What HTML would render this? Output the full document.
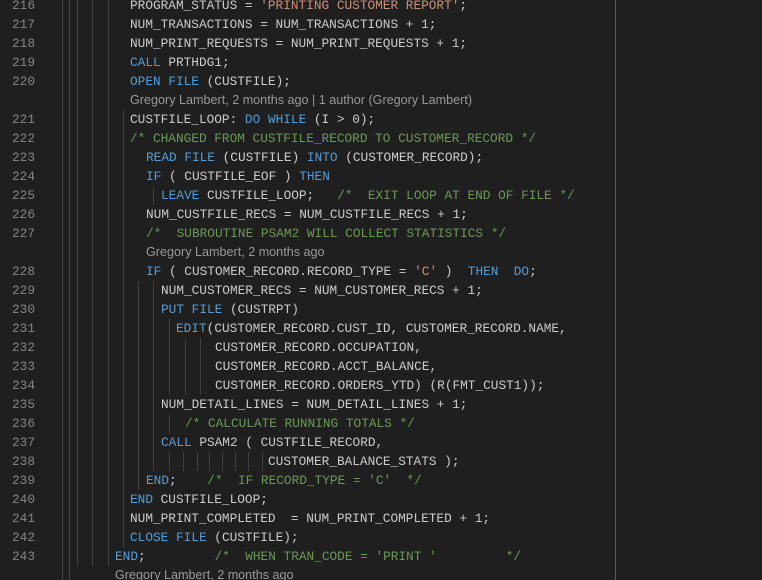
<!DOCTYPE html>
<html><head><meta charset="utf-8"><style>
html,body{margin:0;padding:0;background:#1f1f1f;width:762px;height:580px;overflow:hidden;position:relative}
.r{position:absolute;height:19px;line-height:19px;white-space:pre;font-family:"Liberation Mono",monospace;font-size:12.77px;color:#cccccc}
.n{position:absolute;left:0;width:35px;text-align:right;height:19px;line-height:19px;font-family:"Liberation Mono",monospace;font-size:12.77px;color:#858585}
.k{color:#569cd6}.c{color:#6a9955}.s{color:#ce9178}.m{color:#cccccc}
.cl{position:absolute;height:19px;line-height:19px;font-family:"Liberation Sans",sans-serif;font-size:12.6px;color:#999999;white-space:pre}
.g{position:absolute;width:1px;background:#404040}
.vb{position:absolute;left:615px;top:0;width:1px;height:580px;background:#5a5a5a}
</style></head><body>
<div class="g" style="left:62px;top:0;height:580px"></div>
<div class="g" style="left:69px;top:0;height:580px"></div>
<div class="g" style="left:77px;top:0;height:566px"></div>
<div class="g" style="left:92px;top:0;height:566px"></div>
<div class="g" style="left:108px;top:0;height:566px"></div>
<div class="g" style="left:123px;top:110px;height:437px"></div>
<div class="g" style="left:138px;top:281px;height:209px"></div>
<div class="g" style="left:153px;top:186px;height:19px"></div>
<div class="g" style="left:153px;top:281px;height:190px"></div>
<div class="g" style="left:169px;top:319px;height:76px"></div>
<div class="g" style="left:169px;top:414px;height:19px"></div>
<div class="g" style="left:169px;top:452px;height:19px"></div>
<div class="g" style="left:185px;top:338px;height:57px"></div>
<div class="g" style="left:200px;top:338px;height:57px"></div>
<div class="g" style="left:183px;top:452px;height:19px"></div>
<div class="g" style="left:197px;top:452px;height:19px"></div>
<div class="g" style="left:209px;top:452px;height:19px"></div>
<div class="g" style="left:222px;top:452px;height:19px"></div>
<div class="g" style="left:235px;top:452px;height:19px"></div>
<div class="g" style="left:248px;top:452px;height:19px"></div>
<div class="g" style="left:262px;top:452px;height:19px"></div>
<div class="vb"></div>

<div class="n" style="top:-4.5px">216</div><div class="r" style="top:-4.5px;left:130px">PROGRAM_STATUS = <span class="s">'PRINTING CUSTOMER REPORT'</span>;</div>
<div class="n" style="top:14.5px">217</div><div class="r" style="top:14.5px;left:130px">NUM_TRANSACTIONS = NUM_TRANSACTIONS + <span class="m">1</span>;</div>
<div class="n" style="top:33.5px">218</div><div class="r" style="top:33.5px;left:130px">NUM_PRINT_REQUESTS = NUM_PRINT_REQUESTS + <span class="m">1</span>;</div>
<div class="n" style="top:52.5px">219</div><div class="r" style="top:52.5px;left:130px"><span class="k">CALL</span> PRTHDG1;</div>
<div class="n" style="top:71.5px">220</div><div class="r" style="top:71.5px;left:130px"><span class="k">OPEN</span> <span class="k">FILE</span> (CUSTFILE);</div>
<div class="cl" style="top:91px;left:130px">Gregory Lambert, 2 months ago | 1 author (Gregory Lambert)</div>
<div class="n" style="top:109.5px">221</div><div class="r" style="top:109.5px;left:130px">CUSTFILE_LOOP: <span class="k">DO</span> <span class="k">WHILE</span> (I &gt; <span class="m">0</span>);</div>
<div class="n" style="top:128.5px">222</div><div class="r c" style="top:128.5px;left:130px">/* CHANGED FROM CUSTFILE_RECORD TO CUSTOMER_RECORD */</div>
<div class="n" style="top:147.5px">223</div><div class="r" style="top:147.5px;left:146px"><span class="k">READ</span> <span class="k">FILE</span> (CUSTFILE) <span class="k">INTO</span> (CUSTOMER_RECORD);</div>
<div class="n" style="top:166.5px">224</div><div class="r" style="top:166.5px;left:146px"><span class="k">IF</span> ( CUSTFILE_EOF ) <span class="k">THEN</span></div>
<div class="n" style="top:185.5px">225</div><div class="r" style="top:185.5px;left:161px"><span class="k">LEAVE</span> CUSTFILE_LOOP;   <span class="c">/*  EXIT LOOP AT END OF FILE */</span></div>
<div class="n" style="top:204.5px">226</div><div class="r" style="top:204.5px;left:146px">NUM_CUSTFILE_RECS = NUM_CUSTFILE_RECS + <span class="m">1</span>;</div>
<div class="n" style="top:223.5px">227</div><div class="r c" style="top:223.5px;left:146px">/*  SUBROUTINE PSAM2 WILL COLLECT STATISTICS */</div>
<div class="cl" style="top:243px;left:146px">Gregory Lambert, 2 months ago</div>
<div class="n" style="top:261.5px">228</div><div class="r" style="top:261.5px;left:146px"><span class="k">IF</span> ( CUSTOMER_RECORD.RECORD_TYPE = <span class="s">'C'</span> )  <span class="k">THEN</span>  <span class="k">DO</span>;</div>
<div class="n" style="top:280.5px">229</div><div class="r" style="top:280.5px;left:161px">NUM_CUSTOMER_RECS = NUM_CUSTOMER_RECS + <span class="m">1</span>;</div>
<div class="n" style="top:299.5px">230</div><div class="r" style="top:299.5px;left:161px"><span class="k">PUT</span> <span class="k">FILE</span> (CUSTRPT)</div>
<div class="n" style="top:318.5px">231</div><div class="r" style="top:318.5px;left:176px"><span class="k">EDIT</span>(CUSTOMER_RECORD.CUST_ID, CUSTOMER_RECORD.NAME,</div>
<div class="n" style="top:337.5px">232</div><div class="r" style="top:337.5px;left:215px">CUSTOMER_RECORD.OCCUPATION,</div>
<div class="n" style="top:356.5px">233</div><div class="r" style="top:356.5px;left:215px">CUSTOMER_RECORD.ACCT_BALANCE,</div>
<div class="n" style="top:375.5px">234</div><div class="r" style="top:375.5px;left:215px">CUSTOMER_RECORD.ORDERS_YTD) (R(FMT_CUST1));</div>
<div class="n" style="top:394.5px">235</div><div class="r" style="top:394.5px;left:161px">NUM_DETAIL_LINES = NUM_DETAIL_LINES + <span class="m">1</span>;</div>
<div class="n" style="top:413.5px">236</div><div class="r c" style="top:413.5px;left:185px">/* CALCULATE RUNNING TOTALS */</div>
<div class="n" style="top:432.5px">237</div><div class="r" style="top:432.5px;left:161px"><span class="k">CALL</span> PSAM2 ( CUSTFILE_RECORD,</div>
<div class="n" style="top:451.5px">238</div><div class="r" style="top:451.5px;left:268px">CUSTOMER_BALANCE_STATS );</div>
<div class="n" style="top:470.5px">239</div><div class="r" style="top:470.5px;left:146px"><span class="k">END</span>;    <span class="c">/*  IF RECORD_TYPE = 'C'  */</span></div>
<div class="n" style="top:489.5px">240</div><div class="r" style="top:489.5px;left:130px"><span class="k">END</span> CUSTFILE_LOOP;</div>
<div class="n" style="top:508.5px">241</div><div class="r" style="top:508.5px;left:130px">NUM_PRINT_COMPLETED  = NUM_PRINT_COMPLETED + <span class="m">1</span>;</div>
<div class="n" style="top:527.5px">242</div><div class="r" style="top:527.5px;left:130px"><span class="k">CLOSE</span> <span class="k">FILE</span> (CUSTFILE);</div>
<div class="n" style="top:546.5px">243</div><div class="r" style="top:546.5px;left:115px"><span class="k">END</span>;         <span class="c">/*  WHEN TRAN_CODE = 'PRINT '         */</span></div>
<div class="cl" style="top:566px;left:115px">Gregory Lambert, 2 months ago</div>
</body></html>
